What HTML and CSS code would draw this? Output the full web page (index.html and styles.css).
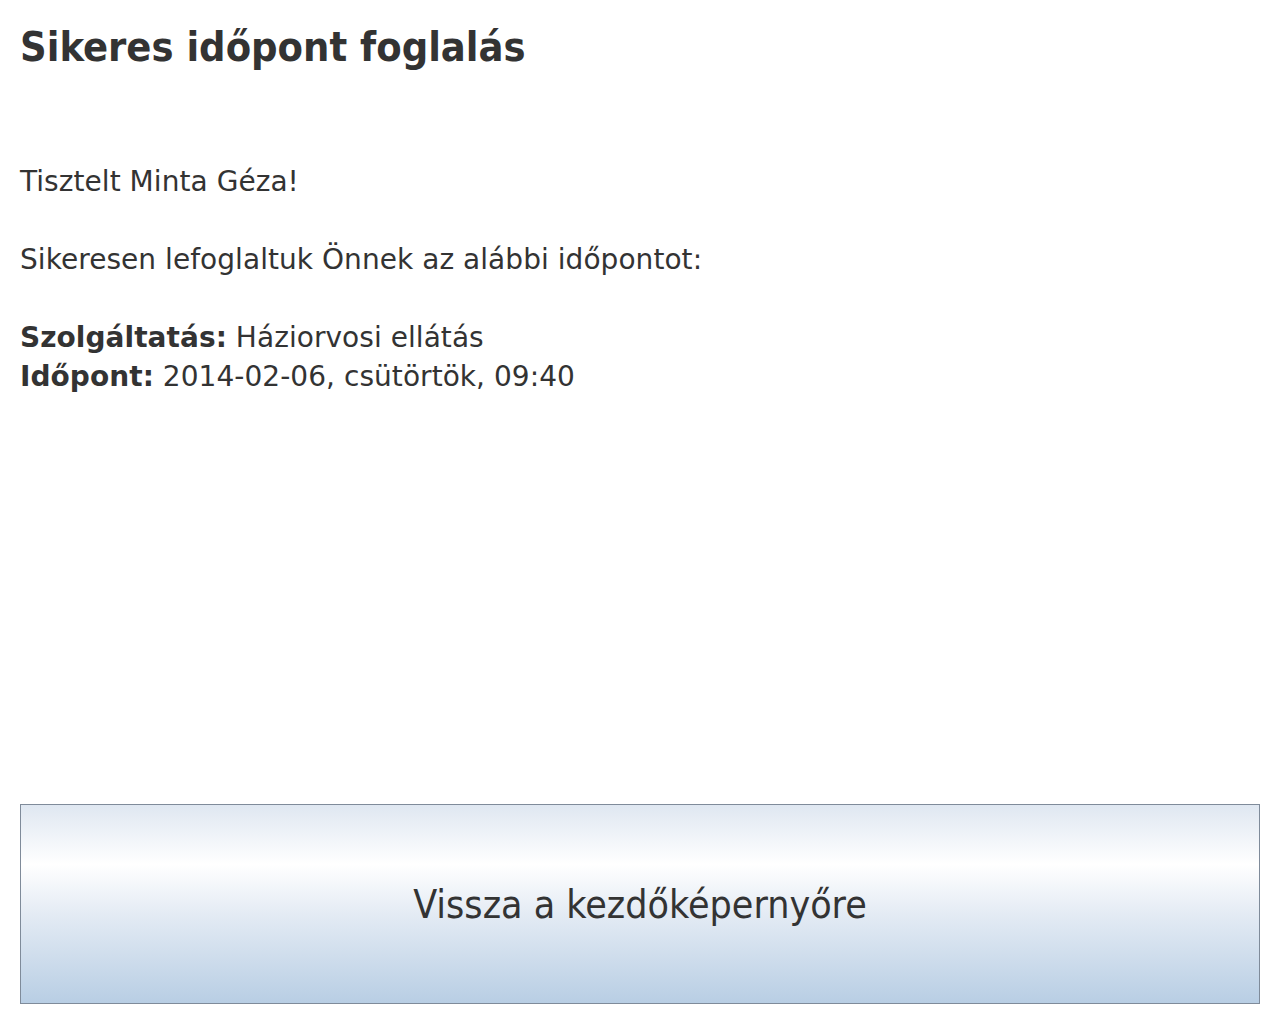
FILE: index.html
```html
<!DOCTYPE html>
<html lang="hu">
<head>
    <meta charset="UTF-8">
    <meta name="viewport" content="width=device-width, initial-scale=1.0">
    <title>Sikeres időpont foglalás</title>
    <link rel="stylesheet" href="styles.css">
</head>
<body>
    <div class="page">
        <h1>Sikeres időpont foglalás</h1>
        <div class="message">
            <p>Tisztelt Minta Géza!</p>
            <p>Sikeresen lefoglaltuk Önnek az alábbi időpontot:</p>
            <p>
                <b>Szolgáltatás:</b> Háziorvosi ellátás<br>
                <b>Időpont:</b> 2014-02-06, csütörtök, 09:40
            </p>
        </div>
        <button class="back-button">Vissza a kezdőképernyőre</button>
    </div>
</body>
</html>
```

FILE: styles.css
```css
html, body {
    margin: 0;
    padding: 0;
}
body {
    font-family: "DejaVu Sans", sans-serif;
    color: #333;
    background-color: #fff;
}
.page {
    display: flex;
    flex-direction: column;
    min-height: 100vh;
    box-sizing: border-box;
    padding: 20px 20px 13px 20px;
}
h1 {
    font-family: "DejaVu Sans Condensed", "DejaVu Sans", sans-serif;
    font-size: 41.2px;
    font-weight: bold;
    line-height: 54px;
    margin: 0;
}
.message {
    margin-top: 88px;
    font-size: 28px;
    line-height: 39px;
    letter-spacing: 0.05px;
}
.message p {
    margin: 0 0 39px 0;
}
.message b {
    font-weight: bold;
}
.back-button {
    margin-top: auto;
    width: 100%;
    height: 200px;
    border: 1px solid #7f8b9a;
    background: linear-gradient(to bottom, #dfe7f1 0%, #ffffff 30%, #e4ebf4 55%, #b8cee4 100%);
    font-family: "DejaVu Sans Condensed", "DejaVu Sans", sans-serif;
    font-size: 39px;
    color: #333;
    cursor: pointer;
    padding: 0;
}
```
